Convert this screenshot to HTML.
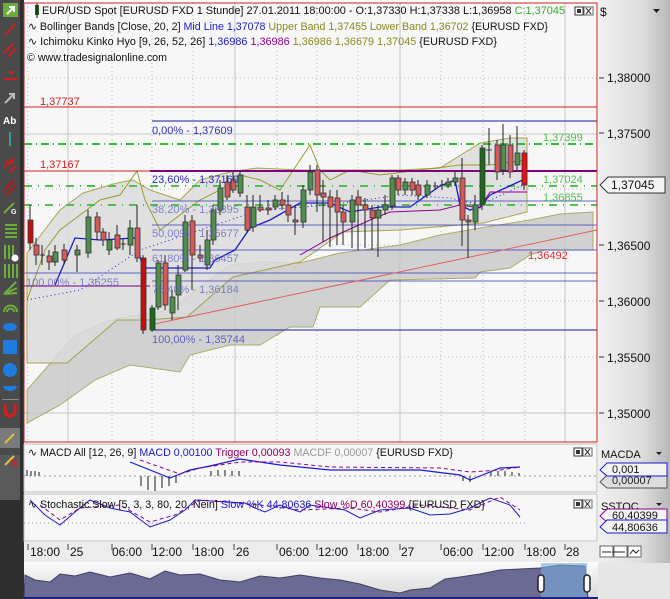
<!DOCTYPE html>
<html><head><meta charset="utf-8"><style>
body{margin:0;width:670px;height:599px;overflow:hidden;background:#fff;font-family:"Liberation Sans",sans-serif}
svg{display:block}
text{font-family:"Liberation Sans",sans-serif}
</style></head><body>
<svg width="670" height="599" viewBox="0 0 670 599" xmlns="http://www.w3.org/2000/svg">
<defs>
<linearGradient id="ax" x1="0" x2="1"><stop offset="0" stop-color="#f0f0f0"/><stop offset="0.6" stop-color="#dedede"/><stop offset="1" stop-color="#b8b8b8"/></linearGradient>
<linearGradient id="nav" x1="0" y1="0" x2="0" y2="1"><stop offset="0" stop-color="#fafafa"/><stop offset="1" stop-color="#d8d8d8"/></linearGradient>
</defs>
<rect x="0" y="0" width="24" height="599" fill="#2e2e2e"/>
<rect x="0" y="0" width="20" height="455" fill="#4a4a4a"/>
<rect x="0" y="455" width="20" height="45" fill="#5a5a5a"/>
<rect x="3" y="3" width="15" height="14" fill="#6cae3c"/><path d="M7 14 L14 7 M9 7h5v5" stroke="#fff" stroke-width="2" fill="none"/>
<path d="M5 35 L15 24" stroke="#d02020" stroke-width="2"/>
<path d="M4 53 L13 44 M8 57 L16 48" stroke="#d02020" stroke-width="2"/>
<rect x="4" y="78" width="13" height="2" fill="#d02020"/><rect x="9" y="71" width="4" height="3" fill="#d02020"/>
<path d="M5 103 L14 94 M9 94h5v5" stroke="#bbb" stroke-width="2" fill="none"/>
<text x="3" y="124" font-size="10" font-weight="bold" fill="#fff">Ab</text>
<rect x="9" y="132" width="2" height="14" fill="#3a9a9a"/>
<path d="M4 168 L14 158 M6 162 h8 M10 172 l6-6" stroke="#c02020" stroke-width="2.5"/>
<path d="M4 190 L14 180 M6 195 L16 185" stroke="#a02020" stroke-width="2.5"/>
<path d="M4 213 L14 203" stroke="#6cae3c" stroke-width="2"/><text x="11" y="214" font-size="7" font-weight="bold" fill="#fff">G</text>
<path d="M5 225h12 M5 229h12 M5 233h12 M5 237h12" stroke="#6cae3c" stroke-width="2"/>
<path d="M5 245v14 M9 245v14 M13 245v10" stroke="#6cae3c" stroke-width="2"/><circle cx="15" cy="258" r="3.5" fill="#fff"/>
<path d="M5 264v14 M9 264v14 M13 264v14 M17 264v14" stroke="#6cae3c" stroke-width="2"/>
<path d="M4 294 L16 282 M4 294 L17 288 M4 294 L17 293" stroke="#6cae3c" stroke-width="2"/>
<path d="M4 312 a6 6 0 0 1 13 0 M7 312 a3 3 0 0 1 7 0" stroke="#6cae3c" stroke-width="2" fill="none"/>
<ellipse cx="10" cy="327" rx="7" ry="4" fill="#1e7ce0"/>
<rect x="3" y="340" width="14" height="14" fill="#1e7ce0"/>
<circle cx="10" cy="370" r="7" fill="#1e7ce0"/>
<path d="M3 386 h14 a7 5 0 0 1 -14 0z" fill="#1e7ce0"/>
<rect x="2" y="399" width="17" height="1" fill="#888"/>
<path d="M5 404 v7 a5 5 0 0 0 10 0 v-7" stroke="#d02020" stroke-width="3.5" fill="none"/>
<rect x="0" y="428" width="20" height="20" fill="#7a7a7a"/><path d="M5 443 L14 434" stroke="#e0c040" stroke-width="2"/>
<path d="M5 465 L14 456" stroke="#e0c040" stroke-width="2"/><path d="M11 460 l6 6 M17 460 l-6 6" stroke="#d02020" stroke-width="1.5"/>

<rect x="24" y="3" width="573" height="439" fill="#f7f7f7"/>
<g stroke="#bbb" stroke-width="1" stroke-dasharray="1,3">
<line x1="24" y1="78" x2="597" y2="78"/><line x1="24" y1="189" x2="597" y2="189"/><line x1="24" y1="245" x2="597" y2="245"/><line x1="24" y1="301" x2="597" y2="301"/><line x1="24" y1="357" x2="597" y2="357"/>
<line x1="28" y1="3" x2="28" y2="442"/><line x1="112" y1="3" x2="112" y2="442"/><line x1="152" y1="3" x2="152" y2="442"/><line x1="193" y1="3" x2="193" y2="442"/><line x1="277" y1="3" x2="277" y2="442"/><line x1="317" y1="3" x2="317" y2="442"/><line x1="358" y1="3" x2="358" y2="442"/><line x1="441" y1="3" x2="441" y2="442"/><line x1="483" y1="3" x2="483" y2="442"/><line x1="525" y1="3" x2="525" y2="442"/>
</g>
<g stroke="#c4c4c4"><line x1="68" y1="3" x2="68" y2="442"/><line x1="235" y1="3" x2="235" y2="442"/><line x1="400" y1="3" x2="400" y2="442"/><line x1="565" y1="3" x2="565" y2="442"/><line x1="24" y1="134" x2="597" y2="134"/><line x1="24" y1="413" x2="597" y2="413"/></g>
<polygon points="27,390 75,335 110,320 170,310 230,265 260,262 300,263 340,253 400,245 440,235 480,228 530,220 560,214 593,212 593,250 545,250 530,255 510,268 480,272 475,278 390,280 360,307 320,307 313,327 290,327 260,345 230,345 190,355 180,372 130,365 95,380 60,405 27,423" fill="#c8c8c8" opacity="0.8" stroke="#9a9a40" stroke-width="1"/>
<polygon points="27,253 60,210 83,193 117,183 133,180 150,190 180,200 200,180 230,172 257,168 300,170 400,170 440,168 480,143 510,138 527,138 527,212 483,223 400,230 343,232 300,262 233,277 187,317 147,320 117,320 67,363 27,363" fill="#dcdcdc" opacity="0.85" stroke="#9a9a30" stroke-width="1"/>
<polyline points="27,300 45,250 60,230 80,215 100,200 120,195 137,171 145,200 160,230 180,215 200,200 220,190 240,175 260,180 280,190 300,160 310,145 320,170 330,180 350,170 380,175 420,170 460,165 490,165 527,160" fill="none" stroke="#9a9a30"/>
<line x1="24" y1="107" x2="597" y2="107" stroke="#d02020"/>
<line x1="152" y1="121" x2="597" y2="121" stroke="#1a1aa0"/>
<line x1="24" y1="144" x2="597" y2="144" stroke="#30c030" stroke-width="2" stroke-dasharray="8,4,1,4"/>
<line x1="24" y1="171" x2="597" y2="171" stroke="#d02020"/>
<line x1="150" y1="171" x2="597" y2="171" stroke="#800080" stroke-width="2"/>
<line x1="24" y1="186" x2="597" y2="186" stroke="#50c050" stroke-width="2" stroke-dasharray="8,6,1,6"/>
<line x1="24" y1="205" x2="597" y2="205" stroke="#50c050" stroke-width="2" stroke-dasharray="8,6,1,6"/>
<g stroke="#4040c0" opacity="0.8"><line x1="152" y1="201" x2="597" y2="201"/><line x1="152" y1="225" x2="597" y2="225"/><line x1="152" y1="250" x2="597" y2="250"/><line x1="152" y1="281" x2="597" y2="281"/><line x1="24" y1="273" x2="597" y2="273"/></g>
<line x1="24" y1="286" x2="150" y2="286" stroke="#800080"/>
<line x1="152" y1="330" x2="597" y2="330" stroke="#1a1aa0"/>
<line x1="150" y1="325" x2="597" y2="230" stroke="#e06060"/>
<polyline points="55,285 75,238 100,240 135,238 143,268 180,268 210,268 215,260 235,250 250,228 270,220 300,203 330,203 350,212 380,207 410,207 440,186 455,180 460,205 470,210 480,207 490,195 527,178" fill="none" stroke="#1a1ad0" stroke-width="1.3"/>
<polyline points="300,255 330,238 370,220 390,212 440,210 460,205 480,208 490,192 527,192" fill="none" stroke="#900090"/>
<polyline points="27,300 80,290 140,250 200,230 260,210 330,205 400,195 450,198 480,205 527,183" fill="none" stroke="#1a1ad0" stroke-dasharray="1,3"/>
<g stroke="#222" stroke-width="1">
<line x1="30" y1="205" x2="30" y2="250"/><line x1="36" y1="238" x2="36" y2="265"/><line x1="42" y1="245" x2="42" y2="265"/><line x1="49" y1="250" x2="49" y2="270"/><line x1="55" y1="245" x2="55" y2="266"/><line x1="64" y1="244" x2="64" y2="265"/><line x1="77" y1="245" x2="77" y2="272"/><line x1="88" y1="210" x2="88" y2="258"/><line x1="97" y1="212" x2="97" y2="240"/><line x1="103" y1="228" x2="103" y2="246"/><line x1="109" y1="232" x2="109" y2="255"/><line x1="117" y1="225" x2="117" y2="250"/><line x1="123" y1="238" x2="123" y2="250"/><line x1="130" y1="220" x2="130" y2="255"/><line x1="137" y1="205" x2="137" y2="262"/><line x1="143" y1="255" x2="143" y2="334"/><line x1="152" y1="305" x2="152" y2="332"/><line x1="158" y1="260" x2="158" y2="310"/><line x1="165" y1="255" x2="165" y2="310"/><line x1="172" y1="290" x2="172" y2="320"/><line x1="178" y1="265" x2="178" y2="310"/><line x1="185" y1="215" x2="185" y2="272"/><line x1="192" y1="215" x2="192" y2="290"/><line x1="200" y1="245" x2="200" y2="262"/><line x1="207" y1="230" x2="207" y2="270"/><line x1="213" y1="205" x2="213" y2="245"/><line x1="220" y1="180" x2="220" y2="215"/><line x1="227" y1="175" x2="227" y2="200"/><line x1="233" y1="172" x2="233" y2="193"/><line x1="240" y1="170" x2="240" y2="197"/><line x1="247" y1="195" x2="247" y2="233"/><line x1="253" y1="195" x2="253" y2="232"/><line x1="260" y1="195" x2="260" y2="212"/><line x1="268" y1="200" x2="268" y2="215"/><line x1="275" y1="195" x2="275" y2="210"/><line x1="282" y1="192" x2="282" y2="210"/><line x1="288" y1="195" x2="288" y2="222"/><line x1="295" y1="205" x2="295" y2="235"/><line x1="303" y1="185" x2="303" y2="228"/><line x1="310" y1="165" x2="310" y2="195"/><line x1="317" y1="165" x2="317" y2="212"/><line x1="323" y1="180" x2="323" y2="242"/><line x1="330" y1="190" x2="330" y2="247"/><line x1="337" y1="190" x2="337" y2="245"/><line x1="343" y1="205" x2="343" y2="245"/><line x1="352" y1="195" x2="352" y2="248"/><line x1="358" y1="190" x2="358" y2="250"/><line x1="365" y1="198" x2="365" y2="248"/><line x1="372" y1="205" x2="372" y2="250"/><line x1="378" y1="205" x2="378" y2="257"/><line x1="385" y1="195" x2="385" y2="215"/><line x1="392" y1="175" x2="392" y2="210"/><line x1="398" y1="175" x2="398" y2="195"/><line x1="405" y1="178" x2="405" y2="195"/><line x1="412" y1="178" x2="412" y2="195"/><line x1="418" y1="180" x2="418" y2="200"/><line x1="427" y1="180" x2="427" y2="198"/><line x1="435" y1="182" x2="435" y2="190"/><line x1="442" y1="180" x2="442" y2="190"/><line x1="448" y1="178" x2="448" y2="188"/><line x1="455" y1="172" x2="455" y2="186"/><line x1="462" y1="158" x2="462" y2="246"/><line x1="468" y1="215" x2="468" y2="258"/><line x1="475" y1="195" x2="475" y2="230"/><line x1="482" y1="145" x2="482" y2="210"/><line x1="489" y1="128" x2="489" y2="165"/><line x1="497" y1="140" x2="497" y2="180"/><line x1="503" y1="124" x2="503" y2="175"/><line x1="510" y1="135" x2="510" y2="178"/><line x1="517" y1="126" x2="517" y2="170"/><line x1="524" y1="150" x2="524" y2="190"/>
</g>
<g stroke="#333" stroke-width="0.8">
<g fill="#d45a5a">
<rect x="28" y="220" width="5" height="23" fill="#c01010"/><rect x="34" y="245" width="5" height="10"/><rect x="47" y="256" width="5" height="6"/><rect x="62" y="250" width="5" height="10"/><rect x="95" y="217" width="5" height="15"/><rect x="101" y="232" width="5" height="8"/><rect x="115" y="235" width="5" height="13"/><rect x="135" y="228" width="5" height="30"/><rect x="141" y="258" width="5" height="72" fill="#c01010"/><rect x="163" y="263" width="5" height="42"/><rect x="190" y="221" width="5" height="34"/><rect x="198" y="255" width="5" height="3"/><rect x="225" y="182" width="5" height="15"/><rect x="231" y="180" width="5" height="10"/><rect x="245" y="207" width="5" height="23"/><rect x="258" y="207" width="5" height="3"/><rect x="266" y="208" width="5" height="2"/><rect x="280" y="200" width="5" height="5"/><rect x="286" y="205" width="5" height="10"/><rect x="293" y="220" width="5" height="2"/><rect x="315" y="170" width="5" height="25"/><rect x="321" y="193" width="5" height="4"/><rect x="328" y="197" width="5" height="10"/><rect x="335" y="198" width="5" height="14"/><rect x="341" y="212" width="5" height="10"/><rect x="356" y="197" width="5" height="8"/><rect x="363" y="205" width="5" height="5"/><rect x="370" y="210" width="5" height="8"/><rect x="396" y="178" width="5" height="12"/><rect x="410" y="182" width="5" height="8"/><rect x="416" y="185" width="5" height="10"/><rect x="460" y="178" width="5" height="42"/><rect x="466" y="220" width="5" height="2"/><rect x="495" y="145" width="5" height="27"/><rect x="508" y="145" width="5" height="27"/><rect x="522" y="153" width="5" height="32" fill="#e81010"/>
</g>
<g fill="#4e8e4e">
<rect x="53" y="252" width="5" height="10"/><rect x="75" y="250" width="5" height="5"/><rect x="86" y="217" width="5" height="36"/><rect x="107" y="240" width="5" height="10"/><rect x="128" y="228" width="5" height="17"/><rect x="150" y="308" width="5" height="22" fill="#1a6a1a"/><rect x="156" y="263" width="5" height="44"/><rect x="170" y="297" width="5" height="16"/><rect x="176" y="275" width="5" height="20"/><rect x="183" y="222" width="5" height="48"/><rect x="205" y="240" width="5" height="25"/><rect x="211" y="210" width="5" height="30"/><rect x="218" y="188" width="5" height="22"/><rect x="238" y="175" width="5" height="18"/><rect x="251" y="207" width="5" height="20"/><rect x="273" y="200" width="5" height="7"/><rect x="301" y="190" width="5" height="32"/><rect x="308" y="172" width="5" height="18"/><rect x="350" y="200" width="5" height="22"/><rect x="376" y="210" width="5" height="8"/><rect x="383" y="205" width="5" height="5"/><rect x="390" y="178" width="5" height="28"/><rect x="403" y="182" width="5" height="8"/><rect x="425" y="185" width="5" height="10"/><rect x="446" y="182" width="5" height="3"/><rect x="453" y="178" width="5" height="4"/><rect x="473" y="205" width="5" height="17"/><rect x="480" y="148" width="5" height="57" fill="#1a6a1a"/><rect x="501" y="145" width="5" height="25"/><rect x="515" y="153" width="5" height="12"/>
</g>
<g stroke="#222"><line x1="40" y1="255" x2="45" y2="255"/><line x1="121" y1="244" x2="126" y2="244"/><line x1="433" y1="186" x2="438" y2="186"/><line x1="440" y1="185" x2="445" y2="185"/><line x1="486" y1="150" x2="492" y2="150"/></g>
</g>
<g font-size="11">
<text x="40" y="105" fill="#d02020">1,37737</text>
<text x="152" y="134" fill="#3030c0">0,00% - 1,37609</text>
<text x="40" y="168" fill="#d02020">1,37167</text>
<text x="152" y="183" fill="#3030c0">23,60% - 1,37169</text>
<g fill="#6060c0" opacity="0.75"><text x="152" y="213">38,20% - 1,36895</text><text x="152" y="237">50,00% - 1,36677</text><text x="152" y="262">61,80% - 1,36457</text><text x="152" y="293">76,40% - 1,36184</text><text x="26" y="286">100,00% - 1,36255</text></g>
<text x="152" y="343" fill="#6060c0">100,00% - 1,35744</text>
<text x="543" y="141" fill="#50c050">1,37399</text>
<text x="543" y="183" fill="#50c050">1,37024</text>
<text x="543" y="201" fill="#50c050">1,36855</text>
<text x="528" y="259" fill="#e03030">1,36492</text>
</g>
<rect x="35" y="5" width="4" height="10" fill="#1a6a1a"/><line x1="37" y1="3" x2="37" y2="18" stroke="#111"/>
<g font-size="11" fill="#111">
<text x="42" y="14" textLength="523" lengthAdjust="spacingAndGlyphs">EUR/USD Spot [EURUSD FXD  1 Stunde] 27.01.2011 18:00:00 - O:1,37330 H:1,37338 L:1,36958 <tspan fill="#30b030">C:1,37045</tspan></text>
<text x="28" y="30" textLength="520" lengthAdjust="spacingAndGlyphs">∿ Bollinger Bands [Close, 20, 2] <tspan fill="#1a1ad0">Mid Line 1,37078</tspan> <tspan fill="#8a8a20">Upper Band 1,37455 Lower Band 1,36702</tspan> {EURUSD FXD}</text>
<text x="28" y="45" textLength="469" lengthAdjust="spacingAndGlyphs">∿ Ichimoku Kinko Hyo [9, 26, 52, 26] <tspan fill="#1a1ad0">1,36986</tspan> <tspan fill="#900090">1,36986</tspan> <tspan fill="#8a8a20">1,36986 1,36679 1,37045</tspan> {EURUSD FXD}</text>
<text x="27" y="61" textLength="140" lengthAdjust="spacingAndGlyphs">© www.tradesignalonline.com</text>
</g>
<rect x="575" y="7" width="8" height="8" fill="#fff" stroke="#333"/><rect x="577" y="9" width="4" height="4" fill="#333"/>
<rect x="584" y="7" width="9" height="8" fill="#fff" stroke="#666"/><path d="M586 8l5 6M591 8l-5 6" stroke="#333"/>
<rect x="24" y="3" width="573" height="439" fill="none" stroke="#d02020"/>

<rect x="598" y="0" width="72" height="563" fill="url(#ax)"/>
<text x="600" y="16" font-size="12" fill="#111">$</text><path d="M653 9h7l-3.5 4z" fill="#222"/>
<g stroke="#333"><line x1="599" y1="78" x2="604" y2="78"/><line x1="599" y1="133" x2="604" y2="133"/><line x1="599" y1="245" x2="604" y2="245"/><line x1="599" y1="301" x2="604" y2="301"/><line x1="599" y1="357" x2="604" y2="357"/><line x1="599" y1="413" x2="604" y2="413"/></g>
<g font-size="12" fill="#111"><text x="607" y="82">1,38000</text><text x="607" y="138">1,37500</text><text x="607" y="250">1,36500</text><text x="607" y="306">1,36000</text><text x="607" y="362">1,35500</text><text x="607" y="418">1,35000</text></g>
<path d="M600 185 l8 -8 h57 v16 h-57z" fill="#f4f4f4" stroke="#333"/><text x="611" y="189" font-size="12" fill="#111">1,37045</text>

<rect x="24" y="444" width="573" height="48" fill="#f7f7f7" stroke="#bbb"/>
<line x1="24" y1="476" x2="597" y2="476" stroke="#999" stroke-dasharray="2,3"/>
<g fill="#888"><rect x="26" y="470" width="2" height="6"/><rect x="30" y="471" width="2" height="5"/><rect x="34" y="471" width="2" height="5"/><rect x="38" y="472" width="2" height="4"/><rect x="140" y="476" width="2" height="10"/><rect x="147" y="476" width="2" height="14"/><rect x="154" y="476" width="2" height="15"/><rect x="161" y="476" width="2" height="12"/><rect x="168" y="476" width="2" height="10"/><rect x="175" y="476" width="2" height="7"/><rect x="210" y="471" width="2" height="5"/><rect x="217" y="470" width="2" height="6"/><rect x="224" y="470" width="2" height="6"/><rect x="231" y="471" width="2" height="5"/><rect x="238" y="471" width="2" height="5"/><rect x="462" y="476" width="2" height="5"/><rect x="469" y="476" width="2" height="6"/><rect x="490" y="472" width="2" height="4"/><rect x="497" y="471" width="2" height="5"/><rect x="504" y="471" width="2" height="5"/><rect x="511" y="472" width="2" height="4"/><rect x="518" y="473" width="2" height="3"/></g>
<polyline points="130,462 150,470 170,478 190,470 210,466 240,459 280,465 330,470 420,470 460,475 470,480 500,468 520,467" fill="none" stroke="#1a1ad0" stroke-width="1.2"/>
<polyline points="140,460 160,467 180,474 200,468 240,462 280,462 330,467 440,468 470,472 500,470 520,467" fill="none" stroke="#900090" stroke-dasharray="4,3"/>
<text x="28" y="456" font-size="11" fill="#111" textLength="425" lengthAdjust="spacingAndGlyphs">∿ MACD All [12, 26, 9] <tspan fill="#1a1ad0">MACD 0,00100</tspan> <tspan fill="#900060">Trigger 0,00093</tspan> <tspan fill="#999">MACDF 0,00007</tspan> {EURUSD FXD}</text>
<rect x="574" y="448" width="8" height="8" fill="#fff" stroke="#333"/><rect x="576" y="450" width="4" height="4" fill="#333"/><rect x="583" y="448" width="9" height="8" fill="#fff" stroke="#666"/><path d="M585 449l5 6M590 449l-5 6" stroke="#333"/>
<text x="601" y="458" font-size="11" fill="#111">MACDA</text><path d="M656 452h6l-3 3z" fill="#222"/>
<path d="M600 482 l7 -7 h60 v13 h-60z" fill="#ddd" stroke="#555"/><text x="612" y="484" font-size="11" fill="#222">0,00007</text>
<path d="M600 470 l7 -7 h60 v13 h-60z" fill="#f4f4f4" stroke="#1a1ad0"/><text x="612" y="473" font-size="11" fill="#111">0,001</text>

<rect x="24" y="494" width="573" height="47" fill="#f7f7f7" stroke="#bbb"/>
<line x1="24" y1="523" x2="525" y2="523" stroke="#999" stroke-dasharray="1,3"/>
<polyline points="30,500 45,515 60,525 75,512 90,500 110,508 130,512 150,527 170,520 185,510 195,500 245,503 255,508 265,512 280,505 300,512 310,505 345,510 360,518 380,510 410,508 430,515 450,514 470,508 490,498 510,505 520,517" fill="none" stroke="#1a1ad0"/>
<polyline points="40,505 60,520 80,508 120,505 150,522 175,515 200,500 260,505 300,510 350,508 380,512 420,505 470,510 500,497 520,510" fill="none" stroke="#900090" stroke-dasharray="4,3"/>
<text x="28" y="508" font-size="11" fill="#111" textLength="457" lengthAdjust="spacingAndGlyphs">∿ Stochastic Slow [5, 3, 3, 80, 20, Nein] <tspan fill="#1a1ad0">Slow %K 44,80636</tspan> <tspan fill="#900060">Slow %D 60,40399</tspan> {EURUSD FXD}</text>
<rect x="574" y="500" width="8" height="8" fill="#fff" stroke="#333"/><rect x="576" y="502" width="4" height="4" fill="#333"/><rect x="583" y="500" width="9" height="8" fill="#fff" stroke="#666"/><path d="M585 501l5 6M590 501l-5 6" stroke="#333"/>
<text x="601" y="510" font-size="11" fill="#111">SSTOC</text><path d="M656 503h6l-3 3z" fill="#222"/>
<path d="M600 516 l7 -7 h60 v13 h-60z" fill="#f4f4f4" stroke="#900090"/><text x="612" y="519" font-size="11" fill="#111">60,40399</text>
<path d="M600 527 l7 -7 h60 v13 h-60z" fill="#f4f4f4" stroke="#1a1ad0"/><text x="612" y="531" font-size="11" fill="#111">44,80636</text>

<rect x="24" y="542" width="574" height="20" fill="#ececec"/>
<g stroke="#444"><line x1="28" y1="544" x2="28" y2="550"/><line x1="68" y1="544" x2="68" y2="550"/><line x1="112" y1="544" x2="112" y2="550"/><line x1="152" y1="544" x2="152" y2="550"/><line x1="193" y1="544" x2="193" y2="550"/><line x1="234" y1="544" x2="234" y2="550"/><line x1="277" y1="544" x2="277" y2="550"/><line x1="317" y1="544" x2="317" y2="550"/><line x1="358" y1="544" x2="358" y2="550"/><line x1="400" y1="544" x2="400" y2="550"/><line x1="441" y1="544" x2="441" y2="550"/><line x1="483" y1="544" x2="483" y2="550"/><line x1="525" y1="544" x2="525" y2="550"/><line x1="565" y1="544" x2="565" y2="550"/></g>
<g font-size="12" fill="#111"><text x="30" y="556">18:00</text><text x="70" y="556">25</text><text x="112" y="556">06:00</text><text x="152" y="556">12:00</text><text x="194" y="556">18:00</text><text x="236" y="556">26</text><text x="279" y="556">06:00</text><text x="318" y="556">12:00</text><text x="359" y="556">18:00</text><text x="401" y="556">27</text><text x="443" y="556">06:00</text><text x="484" y="556">12:00</text><text x="526" y="556">18:00</text><text x="566" y="556">28</text></g>
<g fill="#fff" stroke="#666"><rect x="600" y="546" width="13" height="11"/><rect x="614" y="546" width="13" height="11"/><rect x="628" y="546" width="13" height="11"/></g>
<path d="M602 552h9 M612 552h13 M630 554l3-4 3 3 3-3" stroke="#222" fill="none"/>

<rect x="24" y="563" width="574" height="36" fill="url(#nav)"/>
<rect x="598" y="563" width="72" height="36" fill="#e6e6e6"/>
<polygon points="24,599 25,575 35,580 50,582 60,574 75,576 90,572 110,577 130,573 150,579 165,571 180,575 200,574 220,580 240,582 260,576 280,578 300,575 320,578 340,580 360,584 380,590 400,593 410,590 430,588 445,579 460,577 480,574 500,570 520,569 540,568 560,565 585,566 588,599" fill="#6a6a92" stroke="#40406a"/>
<rect x="541" y="563" width="46" height="36" fill="#7aaee0" opacity="0.6"/>
<rect x="538" y="575" width="6" height="17" rx="3" fill="#fff" stroke="#222" stroke-width="1.5"/>
<rect x="584" y="575" width="6" height="17" rx="3" fill="#fff" stroke="#222" stroke-width="1.5"/>
<line x1="24" y1="598" x2="598" y2="598" stroke="#202080" stroke-width="2"/>
</svg>
</body></html>
